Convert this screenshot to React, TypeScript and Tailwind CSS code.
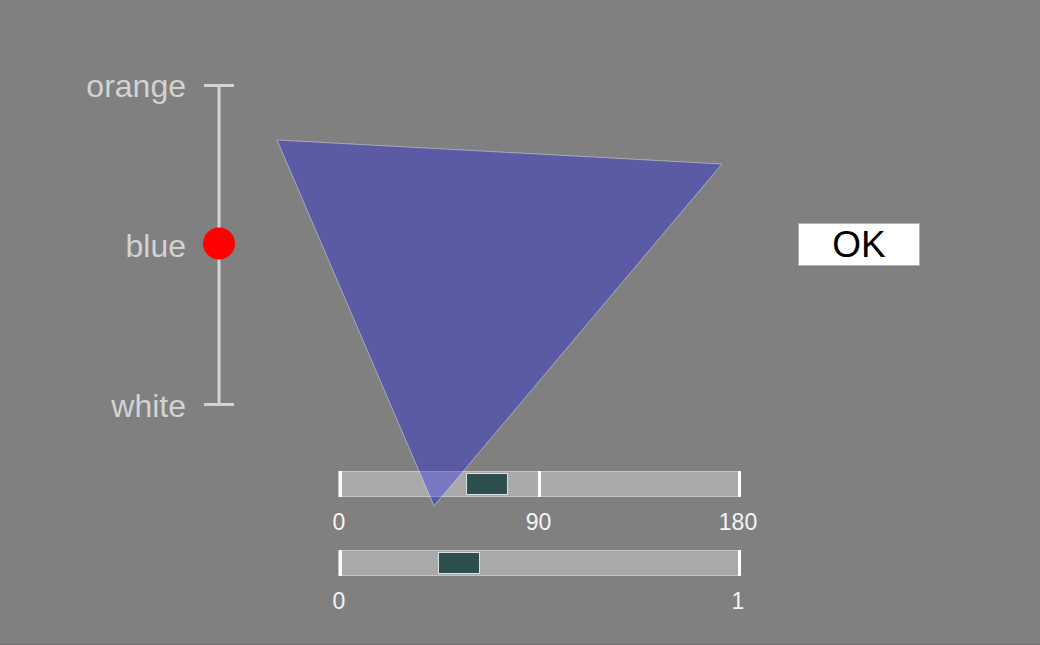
import type { ReactNode } from "react";

type Tick = { at: number; label: string };

function HSlider({
  thumbLeft,
  ticks,
}: {
  thumbLeft: number;
  ticks: Tick[];
}) {
  return (
    <div className="ml-[338px] w-[403px]">
      <div className="relative h-[26px] w-[402px] bg-[#a9a9a9] border border-[#c4c4c4]">
        {ticks.map((t) => (
          <div
            key={t.label}
            className="absolute top-[-1px] h-[26px] w-[3px] bg-white"
            style={{ left: t.at - 1.5 }}
          />
        ))}
        <div
          className="absolute top-[1px] h-[22px] w-[42px] bg-[#2f4f4f] border border-[#d8e4e4]"
          style={{ left: thumbLeft }}
        />
      </div>
      <div className="relative h-[24px] mt-[13px] text-[23px] leading-[24px] text-[#f4f4f4]">
        {ticks.map((t) => (
          <span
            key={t.label}
            className="absolute top-0 -translate-x-1/2 whitespace-nowrap"
            style={{ left: t.at }}
          >
            {t.label}
          </span>
        ))}
      </div>
    </div>
  );
}

function VSlider({ labels }: { labels: ReactNode[] }) {
  return (
    <div className="flex h-[352px]">
      <div className="w-[186px] h-full flex flex-col justify-between text-right text-[32px] leading-[32px] text-[#d3d3d3]">
        {labels.map((l, i) => (
          <span key={i}>{l}</span>
        ))}
      </div>
      <svg width="34" height="322" className="ml-[16px] mt-[14px]">
        <line x1="2" y1="1.5" x2="32" y2="1.5" stroke="#d3d3d3" strokeWidth="3" />
        <line x1="17" y1="1.5" x2="17" y2="320.5" stroke="#d3d3d3" strokeWidth="3" />
        <line x1="2" y1="320.5" x2="32" y2="320.5" stroke="#d3d3d3" strokeWidth="3" />
        <circle cx="17" cy="159.5" r="16" fill="#ff0000" />
      </svg>
    </div>
  );
}

export default function App() {
  return (
    <div
      className="relative w-[1040px] h-[645px] bg-[#808080] border-b border-[#727272] overflow-hidden pt-[70px]"
      style={{ fontFamily: '"Liberation Sans", Arial, sans-serif' }}
    >
      <div className="flex items-start">
        <VSlider labels={["orange", "blue", "white"]} />
        <button className="ml-[562px] mt-[153px] w-[122px] h-[43px] bg-white border border-[#b0b0b0] text-black text-[37px] leading-[40px]">
          OK
        </button>
      </div>

      <div className="mt-[49px]">
        <HSlider
          thumbLeft={127}
          ticks={[
            { at: 1, label: "0" },
            { at: 200.5, label: "90" },
            { at: 400, label: "180" },
          ]}
        />
        <div className="mt-[16px]">
          <HSlider
            thumbLeft={99}
            ticks={[
              { at: 1, label: "0" },
              { at: 400, label: "1" },
            ]}
          />
        </div>
      </div>

      <svg
        className="absolute inset-0 pointer-events-none"
        width="1040"
        height="645"
      >
        <polygon
          points="277,140 722,164 434,506"
          fill="rgba(0,0,255,0.29)"
          stroke="rgba(255,255,255,0.4)"
          strokeWidth="1"
        />
      </svg>
    </div>
  );
}
